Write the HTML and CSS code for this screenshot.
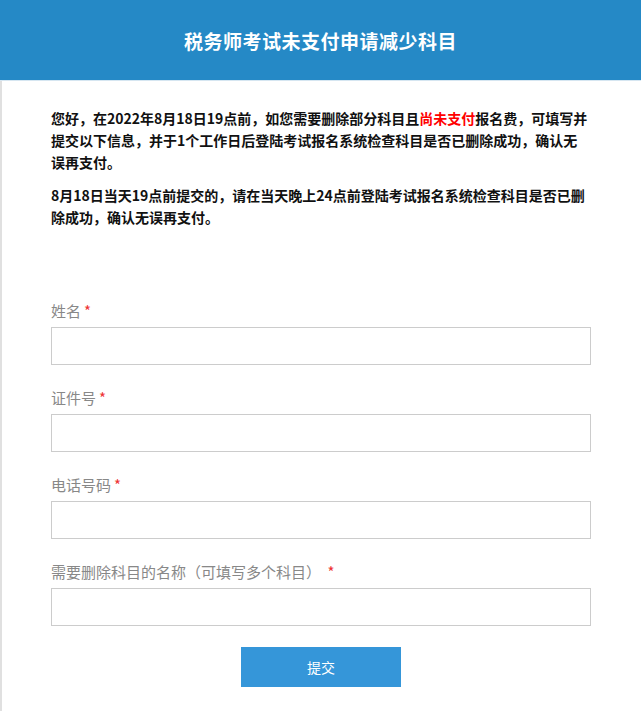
FILE: index.html
```html
<!DOCTYPE html>
<html lang="zh-CN">
<head>
  <meta charset="UTF-8" />
  <meta name="viewport" content="width=device-width, initial-scale=1.0"/>
  <title>税务师考试未支付申请减少科目</title>
  <link rel="stylesheet" href="styles.css">
</head>
<body>

  <!-- Header -->
  <div class="header">
    <h1>税务师考试未支付申请减少科目</h1>
  </div>

  <div class="page">
    <!-- Notice -->
    <div class="notice">
      <p>您好，在2022年8月18日19点前，如您需要删除部分科目且<span class="red">尚未支付</span>报名费，可填写并提交以下信息，并于1个工作日后登陆考试报名系统检查科目是否已删除成功，确认无误再支付。</p>
      <p>8月18日当天19点前提交的，请在当天晚上24点前登陆考试报名系统检查科目是否已删除成功，确认无误再支付。</p>
    </div>

    <!-- Form -->
    <form class="form" onsubmit="return false;">
      <div class="field">
        <label>姓名<span class="req">*</span></label>
        <input type="text" />
      </div>
      <div class="field">
        <label>证件号<span class="req">*</span></label>
        <input type="text" />
      </div>
      <div class="field">
        <label>电话号码<span class="req">*</span></label>
        <input type="text" />
      </div>
      <div class="field">
        <label>需要删除科目的名称（可填写多个科目） <span class="req">*</span></label>
        <input type="text" />
      </div>
      <div class="actions">
        <button type="submit">提交</button>
      </div>
    </form>
  </div>

</body>
</html>
```

FILE: styles.css
```css
* {
  box-sizing: border-box;
  margin: 0;
  padding: 0;
}

html, body {
  font-family: "Noto Sans CJK SC", "Noto Sans", sans-serif;
  background: #fff;
}

/* Header */
.header {
  height: 81px;
  background: #2589c6;
  border-bottom: 1px solid #d6e6f1;
  display: flex;
  align-items: center;
  justify-content: center;
}

.header h1 {
  color: #fff;
  font-size: 19px;
  font-weight: bold;
  letter-spacing: 0.5px;
}

.page {
  border-left: 2px solid #e0e0e0;
  padding: 26px 50px 40px 49px;
  min-height: 630px;
}

/* Notice */
.notice p {
  font-size: 14px;
  font-weight: bold;
  line-height: 22px;
  color: #111;
  margin-bottom: 11px;
}

.notice .red {
  color: #f00;
}

/* Form */
.form {
  margin-top: 73px;
}

.field {
  margin-bottom: 23px;
}

.field label {
  display: block;
  font-size: 15px;
  line-height: 20px;
  color: #888;
  margin-bottom: 6px;
}

.req {
  color: #e33;
  margin-left: 3px;
}

.field input {
  display: block;
  width: 540px;
  height: 38px;
  border: 1px solid #ccc;
  outline: none;
  padding: 0 10px;
  font-size: 14px;
}

.actions {
  text-align: center;
  width: 540px;
}

.actions button {
  width: 160px;
  height: 40px;
  border: none;
  background: #3596d9;
  color: #fff;
  font-size: 14px;
  font-family: inherit;
  cursor: pointer;
  margin-top: -2px;
}
```
